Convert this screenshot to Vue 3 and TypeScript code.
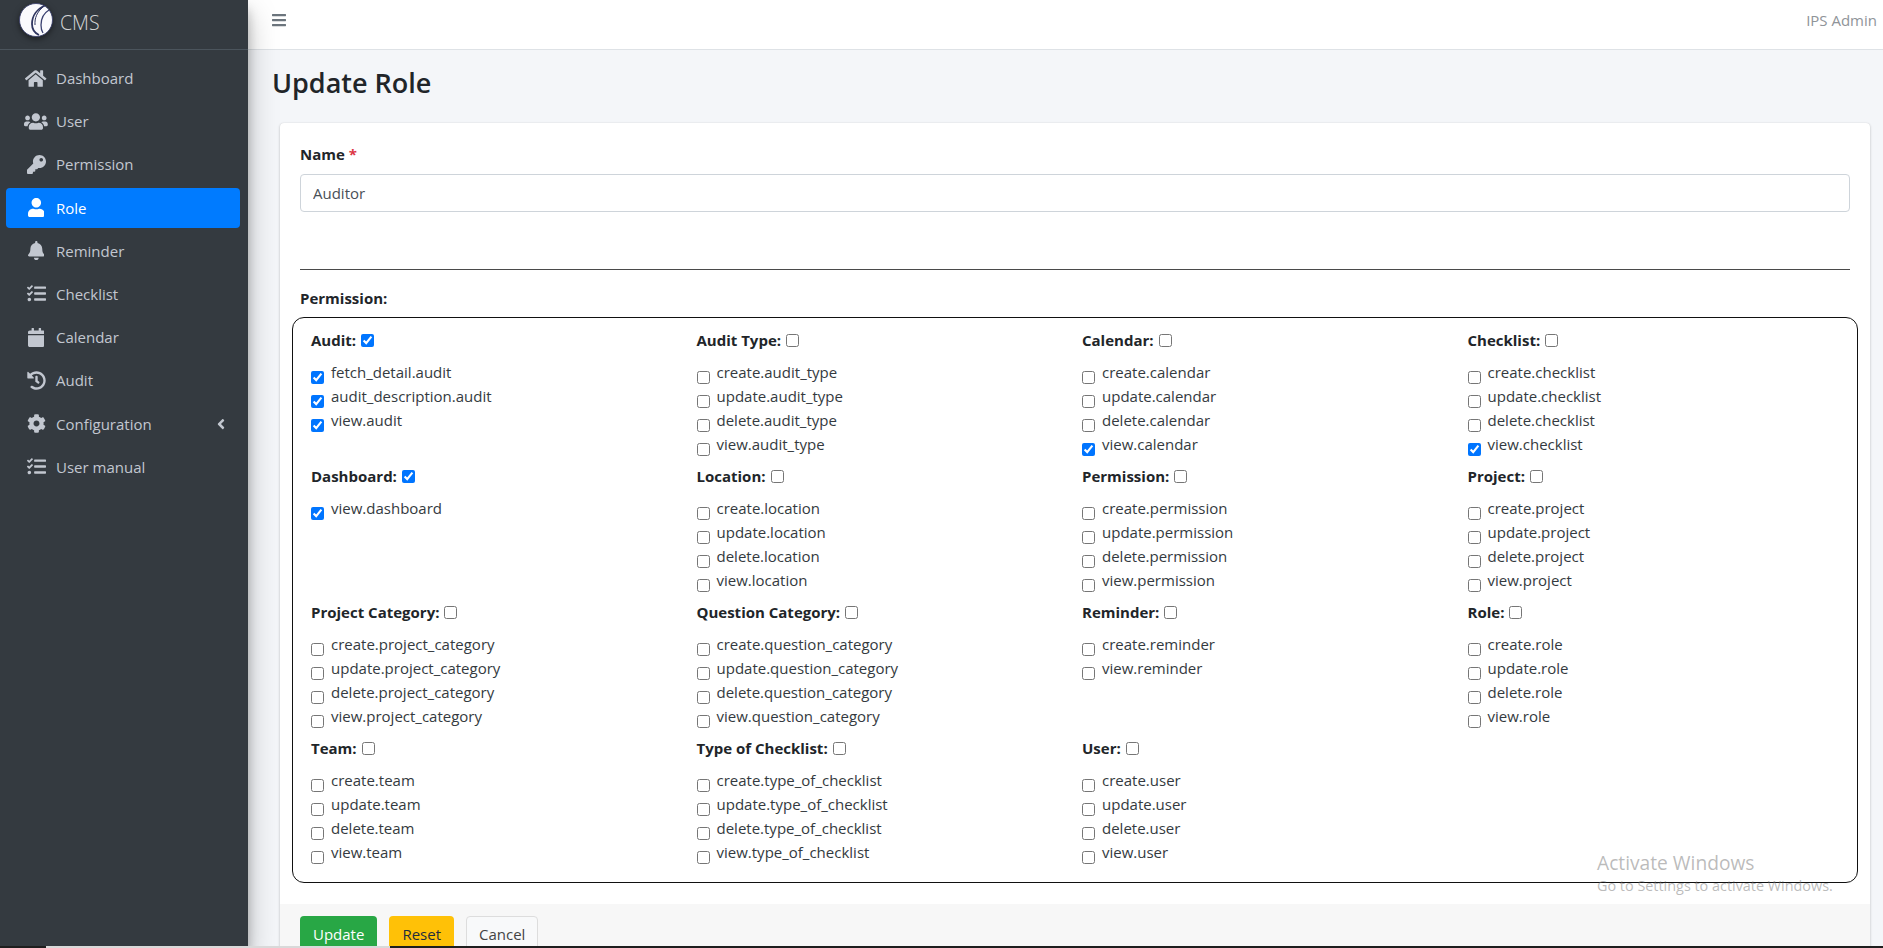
<script setup lang="ts">
interface NavItem {
  label: string
  box: string
  d: string
  active?: boolean
  arrow?: boolean
}
interface Group {
  title: string
  items: string[]
  all?: boolean
  on?: string[]
}

const tasks = 'M139.61 35.5a12 12 0 0 0-17 0L58.93 98.81l-22.7-22.12a12 12 0 0 0-17 0L3.53 92.41a12 12 0 0 0 0 17l47.59 47.4a12.78 12.78 0 0 0 17.61 0l15.59-15.62L156.52 69a12.09 12.09 0 0 0 .09-17zm0 159.19a12 12 0 0 0-17 0l-63.68 63.72-22.7-22.1a12 12 0 0 0-17 0L3.53 252a12 12 0 0 0 0 17L51 316.5a12.77 12.77 0 0 0 17.6 0l15.7-15.69 72.2-72.22a12 12 0 0 0 .09-16.9zM64 368c-26.49 0-48.59 21.5-48.59 48S37.53 464 64 464a48 48 0 0 0 0-96zm432 16H208a16 16 0 0 0-16 16v32a16 16 0 0 0 16 16h288a16 16 0 0 0 16-16v-32a16 16 0 0 0-16-16zm0-320H208a16 16 0 0 0-16 16v32a16 16 0 0 0 16 16h288a16 16 0 0 0 16-16V80a16 16 0 0 0-16-16zm0 160H208a16 16 0 0 0-16 16v32a16 16 0 0 0 16 16h288a16 16 0 0 0 16-16v-32a16 16 0 0 0-16-16z'

const nav: NavItem[] = [
  { label: 'Dashboard', box: '0 0 576 512', d: 'M280.37 148.26L96 300.11V464a16 16 0 0 0 16 16l112.06-.29a16 16 0 0 0 15.92-16V368a16 16 0 0 1 16-16h64a16 16 0 0 1 16 16v95.64a16 16 0 0 0 16 16.05L464 480a16 16 0 0 0 16-16V300L295.67 148.26a12.19 12.19 0 0 0-15.3 0zM571.6 251.47L488 182.56V44.05a12 12 0 0 0-12-12h-56a12 12 0 0 0-12 12v72.61L318.47 43a48 48 0 0 0-61 0L4.34 251.47a12 12 0 0 0-1.6 16.9l25.5 31A12 12 0 0 0 45.15 301l235.22-193.74a12.19 12.19 0 0 1 15.3 0L530.9 301a12 12 0 0 0 16.9-1.6l25.5-31a12 12 0 0 0-1.7-16.93z' },
  { label: 'User', box: '0 0 640 512', d: 'M96 224c35.3 0 64-28.7 64-64s-28.7-64-64-64-64 28.7-64 64 28.7 64 64 64zm448 0c35.3 0 64-28.7 64-64s-28.7-64-64-64-64 28.7-64 64 28.7 64 64 64zm32 32h-64c-17.6 0-33.5 7.1-45.1 18.6 40.3 22.1 68.9 62 75.1 109.4h66c17.7 0 32-14.3 32-32v-32c0-35.3-28.7-64-64-64zm-256 0c61.9 0 112-50.1 112-112S381.9 32 320 32 208 82.1 208 144s50.1 112 112 112zm76.8 32h-8.3c-20.8 10-43.9 16-68.5 16s-47.6-6-68.5-16h-8.3C179.6 288 128 339.6 128 403.2V432c0 26.5 21.5 48 48 48h288c26.5 0 48-21.5 48-48v-28.8c0-63.6-51.6-115.2-115.2-115.2zm-223.7-13.4C161.5 263.1 145.6 256 128 256H64c-35.3 0-64 28.7-64 64v32c0 17.7 14.3 32 32 32h65.9c6.3-47.4 34.9-87.3 75.2-109.4z' },
  { label: 'Permission', box: '0 0 512 512', d: 'M512 176.001C512 273.203 433.202 352 336 352c-11.22 0-22.19-1.062-32.827-3.069l-24.012 27.014A23.999 23.999 0 0 1 261.223 384H224v40c0 13.255-10.745 24-24 24h-40v40c0 13.255-10.745 24-24 24H24c-13.255 0-24-10.745-24-24v-78.059c0-6.365 2.529-12.47 7.029-16.971l161.802-161.802C163.108 213.814 160 195.271 160 176 160 78.798 238.797.001 335.999 0 433.488-.001 512 78.511 512 176.001zM336 128c0 26.51 21.49 48 48 48s48-21.49 48-48-21.49-48-48-48-48 21.49-48 48z' },
  { label: 'Role', box: '0 0 448 512', active: true, d: 'M224 256c70.7 0 128-57.3 128-128S294.7 0 224 0 96 57.3 96 128s57.3 128 128 128zm89.6 32h-16.7c-22.2 10.2-46.9 16-72.9 16s-50.6-5.8-72.9-16h-16.7C60.2 288 0 348.2 0 422.4V464c0 26.5 21.5 48 48 48h352c26.5 0 48-21.5 48-48v-41.6c0-74.2-60.2-134.4-134.4-134.4z' },
  { label: 'Reminder', box: '0 0 448 512', d: 'M224 512c35.32 0 63.97-28.65 63.97-64H160.03c0 35.35 28.65 64 63.97 64zm215.39-149.71c-19.32-20.76-55.47-51.99-55.47-154.29 0-77.7-54.48-139.9-127.94-155.16V32c0-17.67-14.32-32-31.98-32s-31.98 14.33-31.98 32v20.84C118.56 68.1 64.08 130.3 64.08 208c0 102.3-36.15 133.53-55.47 154.29-6 6.45-8.66 14.16-8.61 21.71.11 16.4 12.98 32 32.1 32h383.8c19.12 0 32-15.6 32.1-32 .05-7.55-2.61-15.27-8.61-21.71z' },
  { label: 'Checklist', box: '0 0 512 512', d: tasks },
  { label: 'Calendar', box: '0 0 448 512', d: 'M12 192h424c6.6 0 12 5.4 12 12v260c0 26.5-21.5 48-48 48H48c-26.5 0-48-21.5-48-48V204c0-6.6 5.4-12 12-12zm436-44v-36c0-26.5-21.5-48-48-48h-48V12c0-6.6-5.4-12-12-12h-40c-6.6 0-12 5.4-12 12v52H160V12c0-6.6-5.4-12-12-12h-40c-6.6 0-12 5.4-12 12v52H48C21.5 64 0 85.5 0 112v36c0 6.6 5.4 12 12 12h424c6.6 0 12-5.4 12-12z' },
  { label: 'Audit', box: '0 0 512 512', d: 'M504 255.531c.253 136.64-111.18 248.372-247.82 248.468-59.015.042-113.223-20.53-155.822-54.911-11.077-8.94-11.905-25.541-1.839-35.607l11.267-11.267c8.609-8.609 22.353-9.551 31.891-1.984C173.062 425.135 212.781 440 256 440c101.705 0 184-82.311 184-184 0-101.705-82.311-184-184-184-48.814 0-93.149 18.969-126.068 49.932l50.754 50.754c10.08 10.08 2.941 27.314-11.313 27.314H24c-8.837 0-16-7.163-16-16V38.627c0-14.254 17.234-21.393 27.314-11.314l49.372 49.372C129.209 34.136 189.552 8 256 8c136.81 0 247.747 110.78 248 247.531zm-180.912 78.784l9.823-12.63c8.138-10.463 6.253-25.542-4.21-33.679L288 256.349V152c0-13.255-10.745-24-24-24h-16c-13.255 0-24 10.745-24 24v135.651l65.409 50.874c10.463 8.137 25.541 6.253 33.679-4.21z' },
  { label: 'Configuration', box: '0 0 512 512', arrow: true, d: 'M487.4 315.7l-42.6-24.6c4.3-23.2 4.3-47 0-70.2l42.6-24.6c4.9-2.8 7.1-8.6 5.5-14-11.1-35.6-30-67.8-54.7-94.6-3.8-4.1-10-5.1-14.8-2.3L380.8 110c-17.9-15.4-38.5-27.3-60.8-35.1V25.8c0-5.6-3.9-10.5-9.4-11.7-36.7-8.2-74.3-7.8-109.2 0-5.5 1.2-9.4 6.1-9.4 11.7V75c-22.2 7.9-42.8 19.8-60.8 35.1L88.7 85.5c-4.9-2.8-11-1.9-14.8 2.3-24.7 26.7-43.6 58.9-54.7 94.6-1.7 5.4.6 11.2 5.5 14L67.3 221c-4.3 23.2-4.3 47 0 70.2l-42.6 24.6c-4.9 2.8-7.1 8.6-5.5 14 11.1 35.6 30 67.8 54.7 94.6 3.8 4.1 10 5.1 14.8 2.3l42.6-24.6c17.9 15.4 38.5 27.3 60.8 35.1v49.2c0 5.6 3.9 10.5 9.4 11.7 36.7 8.2 74.3 7.8 109.2 0 5.5-1.2 9.4-6.1 9.4-11.7v-49.2c22.2-7.9 42.8-19.8 60.8-35.1l42.6 24.6c4.9 2.8 11 1.9 14.8-2.3 24.7-26.7 43.6-58.9 54.7-94.6 1.5-5.5-.7-11.3-5.6-14.1zM256 336c-44.1 0-80-35.9-80-80s35.9-80 80-80 80 35.9 80 80-35.9 80-80 80z' },
  { label: 'User manual', box: '0 0 512 512', d: tasks },
]

function crud(name: string): string[] {
  return ['create', 'update', 'delete', 'view'].map((a) => `${a}.${name}`)
}

const groups: Group[] = [
  { title: 'Audit:', all: true, items: ['fetch_detail.audit', 'audit_description.audit', 'view.audit'], on: ['fetch_detail.audit', 'audit_description.audit', 'view.audit'] },
  { title: 'Audit Type:', items: crud('audit_type') },
  { title: 'Calendar:', items: crud('calendar'), on: ['view.calendar'] },
  { title: 'Checklist:', items: crud('checklist'), on: ['view.checklist'] },
  { title: 'Dashboard:', all: true, items: ['view.dashboard'], on: ['view.dashboard'] },
  { title: 'Location:', items: crud('location') },
  { title: 'Permission:', items: crud('permission') },
  { title: 'Project:', items: crud('project') },
  { title: 'Project Category:', items: crud('project_category') },
  { title: 'Question Category:', items: crud('question_category') },
  { title: 'Reminder:', items: ['create.reminder', 'view.reminder'] },
  { title: 'Role:', items: crud('role') },
  { title: 'Team:', items: crud('team') },
  { title: 'Type of Checklist:', items: crud('type_of_checklist') },
  { title: 'User:', items: crud('user') },
]
</script>

<template>
  <div class="app">
    <div class="main">
      <aside class="sidebar">
        <div class="brand">
          <svg class="logo" viewBox="0 0 36 36">
            <circle cx="18" cy="18" r="16.5" fill="#fafafd" />
            <path d="M27 3.5C19 7 14 14 14 22c0 5 2.5 9 7 11" fill="none" stroke="#2f3560" stroke-width="1.8" />
            <path d="M25 5C19 10 16.5 16 17 23" fill="none" stroke="#2f3560" stroke-width="1" />
            <path d="M31 8c-5 3-8 9-8 15 0 3 .6 6 2 8" fill="none" stroke="#3a4070" stroke-width="1.3" />
            <circle cx="18" cy="18" r="16.5" fill="none" stroke="#343a6a" stroke-width="0.8" />
          </svg>
          <span class="brand-text">CMS</span>
        </div>
        <nav class="nav">
          <a v-for="item in nav" :key="item.label" class="nav-link" :class="{ active: item.active }">
            <span class="nav-icon">
              <svg :viewBox="item.box"><path :d="item.d" fill="currentColor" /></svg>
            </span>
            <span>{{ item.label }}</span>
            <svg v-if="item.arrow" class="arrow" viewBox="0 0 256 512">
              <path fill="currentColor" d="M31.7 239l136-136c9.4-9.4 24.6-9.4 33.9 0l22.6 22.6c9.4 9.4 9.4 24.6 0 33.9L127.9 256l96.4 96.4c9.4 9.4 9.4 24.6 0 33.9L201.7 413c-9.4 9.4-24.6 9.4-33.9 0l-136-136c-9.5-9.4-9.5-24.6-.1-34z" />
            </svg>
          </a>
        </nav>
      </aside>

      <div class="wrapper">
        <header class="topbar">
          <svg class="bars" viewBox="0 0 448 512">
            <path fill="currentColor" d="M16 132h416c8.837 0 16-7.163 16-16V76c0-8.837-7.163-16-16-16H16C7.163 60 0 67.163 0 76v40c0 8.837 7.163 16 16 16zm0 160h416c8.837 0 16-7.163 16-16v-40c0-8.837-7.163-16-16-16H16c-8.837 0-16 7.163-16 16v40c0 8.837 7.163 16 16 16zm0 160h416c8.837 0 16-7.163 16-16v-40c0-8.837-7.163-16-16-16H16c-8.837 0-16 7.163-16 16v40c0 8.837 7.163 16 16 16z" />
          </svg>
          <span class="user-name">IPS Admin</span>
        </header>

        <div class="content">
          <h1 class="page-title">Update Role</h1>
          <div class="card">
            <div class="card-body">
              <label class="field-label">Name <span class="req">*</span></label>
              <input class="field" type="text" value="Auditor" />
              <hr class="divider" />
              <div class="perm-label">Permission:</div>
              <div class="perm-box">
                <div v-for="g in groups" :key="g.title" class="group">
                  <div class="group-title">
                    <span>{{ g.title }}</span>
                    <input type="checkbox" :checked="g.all" />
                  </div>
                  <label v-for="p in g.items" :key="p" class="perm">
                    <input type="checkbox" :checked="g.on?.includes(p)" />
                    <span class="perm-text">{{ p }}</span>
                  </label>
                </div>
              </div>
            </div>
            <div class="card-footer">
              <button class="btn green">Update</button>
              <button class="btn yellow">Reset</button>
              <button class="btn plain">Cancel</button>
            </div>
          </div>
        </div>
      </div>

      <div class="watermark">
        <div class="wm-big">Activate Windows</div>
        <div class="wm-small">Go to Settings to activate Windows.</div>
      </div>
    </div>

    <div class="edge">
      <span class="edge-a"></span>
      <span class="edge-b"></span>
      <span class="edge-c"></span>
    </div>
  </div>
</template>

<style>
html, body {
  margin: 0;
  height: 100%;
}
#app {
  height: 100%;
}
</style>

<style scoped>
.app {
  height: 100vh;
  display: flex;
  flex-direction: column;
  overflow: hidden;
  font-family: "Open Sans", "Noto Sans", sans-serif;
  font-size: 15px;
  color: #212529;
}
.main {
  flex: 1;
  min-height: 0;
  display: flex;
  position: relative;
  overflow: hidden;
  background: #f4f6f9;
}
.edge {
  height: 2px;
  display: flex;
  flex: none;
}
.edge-a {
  width: 46px;
  background: #1e1e1e;
}
.edge-b {
  width: 344px;
  background: #d9d9d9;
}
.edge-c {
  flex: 1;
  background: #1e1e1e;
}

.sidebar {
  width: 248px;
  flex: none;
  background: #343a40;
  color: #c2c7d0;
  box-shadow: 0 14px 28px rgba(0, 0, 0, 0.25), 0 10px 10px rgba(0, 0, 0, 0.22);
  z-index: 2;
}
.brand {
  height: 49px;
  border-bottom: 1px solid #4b545c;
  display: flex;
  align-items: center;
  padding-left: 18px;
  gap: 6px;
}
.logo {
  width: 36px;
  height: 36px;
  margin-top: -10px;
  filter: drop-shadow(0 2px 3px rgba(0, 0, 0, 0.5));
}
.brand-text {
  font-size: 19.5px;
  font-weight: 300;
  color: rgba(255, 255, 255, 0.8);
  margin-top: -5px;
}
.nav {
  display: flex;
  flex-direction: column;
  gap: 3.2px;
  padding: 8px 8px 0 6px;
}
.nav-link {
  height: 40px;
  display: flex;
  align-items: center;
  padding: 0 15px;
  gap: 5px;
  border-radius: 4px;
}
.nav-link.active {
  background: #007bff;
  color: #fff;
}
.nav-icon {
  width: 30px;
  display: flex;
  justify-content: center;
}
.nav-icon svg {
  height: 19px;
}
.arrow {
  height: 16px;
  margin-left: auto;
  width: 8px;
}

.wrapper {
  flex: 1;
  min-width: 0;
  display: flex;
  flex-direction: column;
}
.topbar {
  flex: none;
  height: 39px;
  background: #fff;
  border-bottom: 1px solid #dee2e6;
  display: flex;
  align-items: center;
  justify-content: space-between;
  padding: 0 6px 10px 24px;
}
.bars {
  height: 16px;
  color: #6c757d;
}
.user-name {
  color: #8f9499;
}

.content {
  flex: 1;
  min-height: 0;
  padding: 15px 13px 0 24px;
}
.page-title {
  margin: 0 0 22px;
  font-size: 27px;
  line-height: 36px;
  font-weight: 600;
}
.card {
  margin-left: 8px;
  background: #fff;
  border-radius: 4px;
  box-shadow: 0 0 1px rgba(0, 0, 0, 0.125), 0 1px 3px rgba(0, 0, 0, 0.2);
}
.card-body {
  padding: 19px 20px 21px;
}
.field-label {
  display: block;
  font-weight: 700;
  line-height: 24px;
  margin-bottom: 8px;
}
.req {
  color: #dc3545;
}
.field {
  display: block;
  width: 100%;
  height: 38px;
  box-sizing: border-box;
  border: 1px solid #ced4da;
  border-radius: 4px;
  padding: 0 12px;
  font: inherit;
  color: #495057;
  background: #fff;
}
.divider {
  margin: 57px 0 16px;
  border: 0;
  border-top: 1px solid #4a4a4a;
}
.perm-label {
  font-weight: 700;
  line-height: 24px;
  margin-bottom: 7px;
}
.perm-box {
  margin: 0 -8px;
  border: 1.5px solid #111;
  border-radius: 12px;
  padding: 10px 0 17px 18px;
  display: grid;
  grid-template-columns: repeat(4, 385.5px);
  row-gap: 7px;
}
.group-title {
  display: flex;
  align-items: center;
  gap: 5px;
  font-weight: 700;
  line-height: 24px;
  margin-bottom: 9px;
}
.group-title input {
  margin: 0;
}
.perm {
  display: flex;
  align-items: flex-start;
  gap: 7px;
  height: 24px;
  color: #343a40;
}
.perm input {
  margin: 10px 0 0;
  flex: none;
}
.perm-text {
  line-height: 22px;
}

.card-footer {
  background: #f7f7f7;
  padding: 12px 20px;
  display: flex;
  gap: 12px;
}
.btn {
  height: 38px;
  padding: 0 12px 2px;
  border: 1px solid transparent;
  border-radius: 4px;
  font: inherit;
  flex: none;
}
.green {
  background: #28a745;
  color: #fff;
}
.yellow {
  background: #ffc107;
  color: #1f2d3d;
}
.plain {
  background: #f8f9fa;
  border-color: #ddd;
  color: #444;
}

.watermark {
  position: absolute;
  left: 1597px;
  top: 850px;
  z-index: 3;
  pointer-events: none;
  color: rgba(120, 120, 120, 0.5);
}
.wm-big {
  font-size: 19.2px;
  line-height: 26px;
}
.wm-small {
  font-size: 14.4px;
  line-height: 20px;
}
</style>
